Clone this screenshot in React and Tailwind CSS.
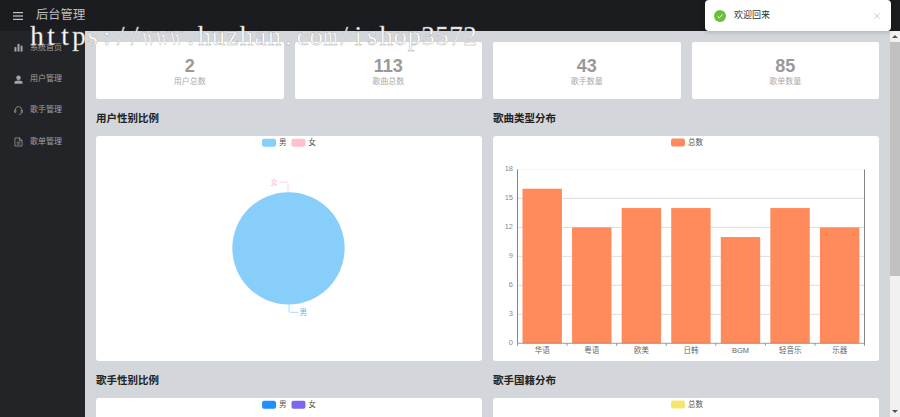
const sans = { fontFamily: '"Liberation Sans", "Noto Sans CJK SC", sans-serif' };

const stats = [
  { value: 2, label: "用户总数" },
  { value: 113, label: "歌曲总数" },
  { value: 43, label: "歌手数量" },
  { value: 85, label: "歌单数量" },
];

const BarsIcon = () => (
  <svg viewBox="0 0 10 10" className="w-[9px] h-[9px]" fill="#a3a5a9">
    <rect x="0.5" y="4.5" width="2.2" height="5" />
    <rect x="3.9" y="1" width="2.2" height="8.5" />
    <rect x="7.3" y="3" width="2.2" height="6.5" />
  </svg>
);

const UserIcon = () => (
  <svg viewBox="0 0 10 10" className="w-[9px] h-[9px]" fill="#a3a5a9">
    <circle cx="5" cy="3" r="2.5" />
    <path d="M0.5 9.6V8.2C0.5 6.8 2 6 5 6s4.5.8 4.5 2.2v1.4z" />
  </svg>
);

const HeadsetIcon = () => (
  <svg viewBox="0 0 10 10" className="w-[9px] h-[9px]" fill="none" stroke="#a3a5a9" strokeWidth="0.8">
    <path d="M1.6 5V4a3.4 3.4 0 0 1 6.8 0v1" />
    <rect x="0.6" y="4.4" width="1.4" height="3" rx="0.5" />
    <rect x="8" y="4.4" width="1.4" height="3" rx="0.5" />
    <path d="M8.6 7.4C8.4 8.8 7 9.4 5.4 9.4" />
  </svg>
);

const DocIcon = () => (
  <svg viewBox="0 0 10 10" className="w-[9px] h-[10px]" fill="none" stroke="#a3a5a9" strokeWidth="0.8">
    <path d="M1 .5h5.2L9 3.2v6.3H1z" />
    <path d="M6 .5v3h3M3 5.2h4M3 7.2h4" />
  </svg>
);

const menu = [
  { icon: <BarsIcon />, label: "系统首页" },
  { icon: <UserIcon />, label: "用户管理" },
  { icon: <HeadsetIcon />, label: "歌手管理" },
  { icon: <DocIcon />, label: "歌单管理" },
];

const Sidebar = () => (
  <div className="w-[85px] shrink-0 bg-[#232428] pt-[1px]">
    {menu.map((item) => (
      <div key={item.label} className="flex h-[31.4px] items-center pl-[14px] gap-[7px] text-[8px] text-[#9fa1a5]">
        <span className="flex w-[9px] justify-center">{item.icon}</span>
        {item.label}
      </div>
    ))}
  </div>
);

const Legend = ({ x, items }) => (
  <g>
    {items.map((it, i) => (
      <g key={it.name}>
        <rect x={x + i * 29.5} y="2.5" width="14" height="8" rx="2" fill={it.color} />
        <text x={x + i * 29.5 + 17} y="9" fontSize="7.5" fill="#555">
          {it.name}
        </text>
      </g>
    ))}
  </g>
);

const PieChart = () => (
  <svg viewBox="0 0 387 225" className="w-full h-full" style={sans}>
    <Legend x={166.5} items={[{ name: "男", color: "#87cefa" }, { name: "女", color: "#ffc0cb" }]} />
    <circle cx="193" cy="112.3" r="56.3" fill="#87cefa" />
    <path d="M192.5 56V47.5a1.5 1.5 0 0 0-1.5-1.5H184" fill="none" stroke="#ffc0cb" strokeWidth="0.7" />
    <text x="175" y="49" fontSize="7.5" fill="#ffc0cb">女</text>
    <path d="M193.5 168.3V175a1.5 1.5 0 0 0 1.5 1.5H203" fill="none" stroke="#87cefa" strokeWidth="0.7" />
    <text x="204" y="179.5" fontSize="7.5" fill="#6fb4de">男</text>
  </svg>
);

const bars = [
  { name: "华语", v: 16 },
  { name: "粤语", v: 12 },
  { name: "欧美", v: 14 },
  { name: "日韩", v: 14 },
  { name: "BGM", v: 11 },
  { name: "轻音乐", v: 14 },
  { name: "乐器", v: 12 },
];

const BarChart = () => {
  const x0 = 24.5;
  const x1 = 371.5;
  const y0 = 207.3;
  const unit = 9.66;
  const step = (x1 - x0) / bars.length;
  return (
    <svg viewBox="0 0 386 225" className="w-full h-full" style={sans}>
      <Legend x={178} items={[{ name: "总数", color: "#ff8a5c" }]} />
      {[0, 3, 6, 9, 12, 15, 18].map((t) => (
        <g key={t}>
          {t > 0 && (
            <line x1={x0} x2={x1} y1={y0 - t * unit} y2={y0 - t * unit} stroke={t === 18 ? "#f0f0f0" : "#cfcfcf"} strokeWidth="0.7" />
          )}
          <text x="20" y={y0 - t * unit + 1.5} fontSize="7.5" textAnchor="end" fill="#888">
            {t}
          </text>
        </g>
      ))}
      {bars.map((b, i) => (
        <g key={b.name}>
          <rect x={x0 + i * step + 5} y={y0 - b.v * unit} width="39.4" height={b.v * unit} fill="#ff8a5c" />
          <line x1={x0 + i * step} x2={x0 + i * step} y1={y0} y2={y0 + 2.5} stroke="#666" strokeWidth="0.7" />
          <text x={x0 + (i + 0.5) * step} y="216.5" fontSize="7.5" textAnchor="middle" fill="#666">
            {b.name}
          </text>
        </g>
      ))}
      <line x1={x1} x2={x1} y1={y0} y2={y0 + 2.5} stroke="#666" strokeWidth="0.7" />
      <line x1={x0} x2={x0} y1={y0 - 18 * unit} y2={y0} stroke="#666" strokeWidth="0.8" />
      <line x1={x1} x2={x1} y1={y0 - 18 * unit} y2={y0} stroke="#666" strokeWidth="0.8" />
      <line x1={x0} x2={x1} y1={y0} y2={y0} stroke="#888" strokeWidth="0.8" />
    </svg>
  );
};

const ChartPanel = ({ title, children }) => (
  <div>
    <div className="flex h-[37px] items-center pt-[2px] text-[10.5px] font-bold text-[#222]">{title}</div>
    <div className="h-[225px] rounded-[3px] bg-white">{children}</div>
  </div>
);

const mark = "https://www.huzhan.com/ishop3572".split("");

const Watermark = () => (
  <div
    className="pointer-events-none absolute left-[30px] top-[20px] flex text-[27px] leading-[32px] text-white [-webkit-text-stroke:0.4px_#a8a8a8]"
    style={{ fontFamily: '"Liberation Serif", serif' }}
  >
    {mark.map((c, i) => (
      <span key={i} className="flex w-[13.97px] justify-center">
        <span className={c === "w" || c === "m" ? "inline-block scale-x-[0.68]" : "inline-block"}>{c}</span>
      </span>
    ))}
  </div>
);

export default function App() {
  return (
    <div className="relative flex h-[417px] w-[900px] flex-col overflow-hidden" style={sans}>
      <div className="flex h-[31px] shrink-0 items-center bg-[#1b1c1f]">
        <svg viewBox="0 0 10 8" className="ml-[13px] h-[8px] w-[10px]" fill="#c4c5c8">
          <rect width="10" height="1.2" />
          <rect y="3.4" width="10" height="1.2" />
          <rect y="6.8" width="10" height="1.2" />
        </svg>
        <span className="ml-[13px] text-[12.3px] text-[#bfc0c3]">后台管理</span>
      </div>

      <div className="flex min-h-0 flex-1">
        <Sidebar />
        <div className="min-w-0 flex-1 overflow-hidden bg-[#d3d7db] px-[11px] pt-[11px]">
          <div className="grid grid-cols-4 gap-[11px]">
            {stats.map((s) => (
              <div key={s.label} className="flex h-[57px] flex-col items-center justify-center rounded-[2px] bg-white pt-[2px]">
                <div className="text-[18px] leading-[20px] font-bold text-[#999]">{s.value}</div>
                <div className="text-[8px] leading-[12px] text-[#aaa]">{s.label}</div>
              </div>
            ))}
          </div>
          <div className="grid grid-cols-2 gap-x-[11px]">
            <ChartPanel title="用户性别比例"><PieChart /></ChartPanel>
            <ChartPanel title="歌曲类型分布"><BarChart /></ChartPanel>
            <ChartPanel title="歌手性别比例">
              <svg viewBox="0 0 387 225" className="h-full w-full" style={sans}>
                <Legend x={166.5} items={[{ name: "男", color: "#1e90ff" }, { name: "女", color: "#7b68ee" }]} />
              </svg>
            </ChartPanel>
            <ChartPanel title="歌手国籍分布">
              <svg viewBox="0 0 386 225" className="h-full w-full" style={sans}>
                <Legend x={178} items={[{ name: "总数", color: "#f5e76e" }]} />
              </svg>
            </ChartPanel>
          </div>
        </div>
        <div className="flex w-[10px] shrink-0 flex-col items-center bg-[#f1f1f1]">
          <div className="flex h-[11px] items-center">
            <div className="h-0 w-0 border-x-[3px] border-b-[3px] border-x-transparent border-b-[#555]" />
          </div>
          <div className="h-[234px] w-full bg-[#c1c1c1]" />
          <div className="mt-auto flex h-[11px] items-center">
            <div className="h-0 w-0 border-x-[3px] border-t-[3px] border-x-transparent border-t-[#555]" />
          </div>
        </div>
      </div>

      <Watermark />

      <div className="absolute left-[705px] top-0 flex h-[31px] w-[186px] items-center rounded-[4px] bg-white pl-[9px] pr-[11px] shadow-[0_1px_5px_rgba(0,0,0,0.2)]">
        <svg viewBox="0 0 12 12" className="h-[12px] w-[12px]">
          <circle cx="6" cy="6" r="6" fill="#67c23a" />
          <path d="M3.5 6.2l1.8 1.7 3.2-3.4" fill="none" stroke="#fff" strokeWidth="1" />
        </svg>
        <span className="ml-[8px] text-[9px] text-[#333]">欢迎回来</span>
        <svg viewBox="0 0 6 6" className="ml-auto h-[6px] w-[6px]" fill="none" stroke="#aaa" strokeWidth="0.6">
          <path d="M.5.5l5 5M5.5.5l-5 5" />
        </svg>
      </div>
    </div>
  );
}
